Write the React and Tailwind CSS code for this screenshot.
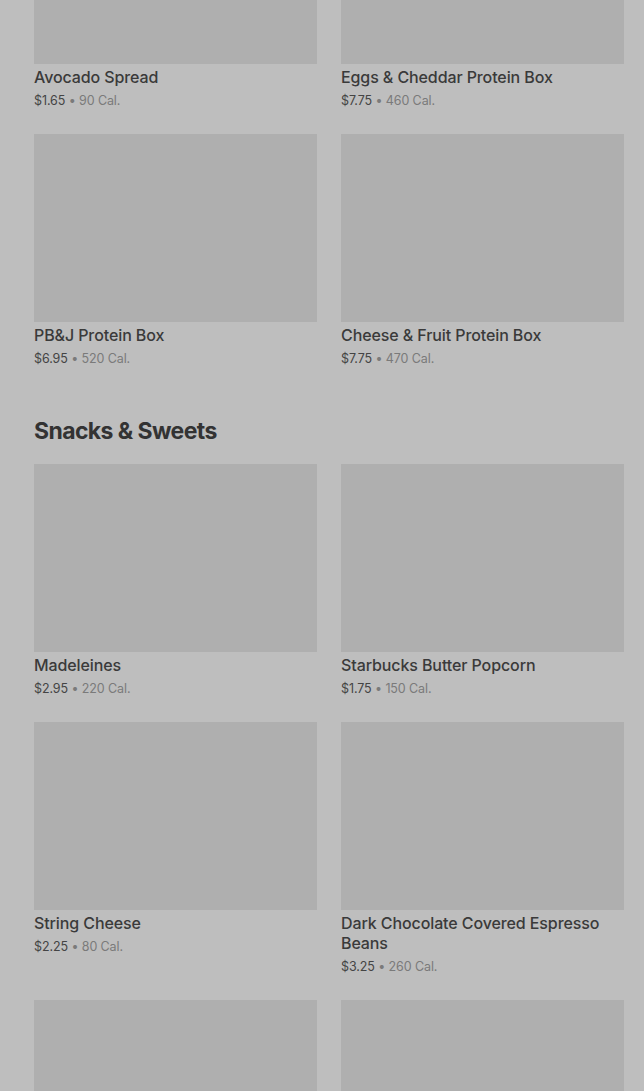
const sections = [
  {
    title: null,
    items: [
      { name: 'Avocado Spread', price: '$1.65', cal: '90 Cal.' },
      { name: 'Eggs & Cheddar Protein Box', price: '$7.75', cal: '460 Cal.' },
      { name: 'PB&J Protein Box', price: '$6.95', cal: '520 Cal.' },
      { name: 'Cheese & Fruit Protein Box', price: '$7.75', cal: '470 Cal.' },
    ],
  },
  {
    title: 'Snacks & Sweets',
    items: [
      { name: 'Madeleines', price: '$2.95', cal: '220 Cal.' },
      { name: 'Starbucks Butter Popcorn', price: '$1.75', cal: '150 Cal.' },
      { name: 'String Cheese', price: '$2.25', cal: '80 Cal.' },
      { name: 'Dark Chocolate Covered Espresso Beans', price: '$3.25', cal: '260 Cal.' },
      { id: 'next-1' },
      { id: 'next-2' },
    ],
  },
];

function ItemCard({ item }) {
  return (
    <div className="flex flex-col">
      <div className="h-[188px] w-full bg-[#afafaf]" />
      {item.name && (
        <>
          <div className="mt-[3px] text-[16px] leading-[20px] font-medium tracking-[-0.1px] text-[#3a3a3a]">
            {item.name}
          </div>
          <div className="mt-[6px] text-[12.5px] leading-[16px] tracking-[-0.1px] text-[#444444]">
            {item.price} <span className="text-[#7a7a7a]">• {item.cal}</span>
          </div>
        </>
      )}
    </div>
  );
}

export default function App() {
  return (
    <div
      className="h-[1091px] overflow-hidden bg-[#bebebe]"
      style={{ fontFamily: 'Inter, "Noto Sans", sans-serif' }}
    >
      <div className="-mt-[124px] pl-[34px] pr-[20px]">
        {sections.map((section, i) => (
          <div key={i} className={section.title ? 'mt-[48px]' : ''}>
            {section.title && (
              <h2 className="mb-[17px] text-[23px] leading-[32px] font-bold text-[#333333] tracking-[-0.6px]">
                {section.title}
              </h2>
            )}
            <div className="grid grid-cols-2 gap-x-[24px] gap-y-[25px]">
              {section.items.map(item => (
                <ItemCard key={item.name || item.id} item={item} />
              ))}
            </div>
          </div>
        ))}
      </div>
    </div>
  );
}
